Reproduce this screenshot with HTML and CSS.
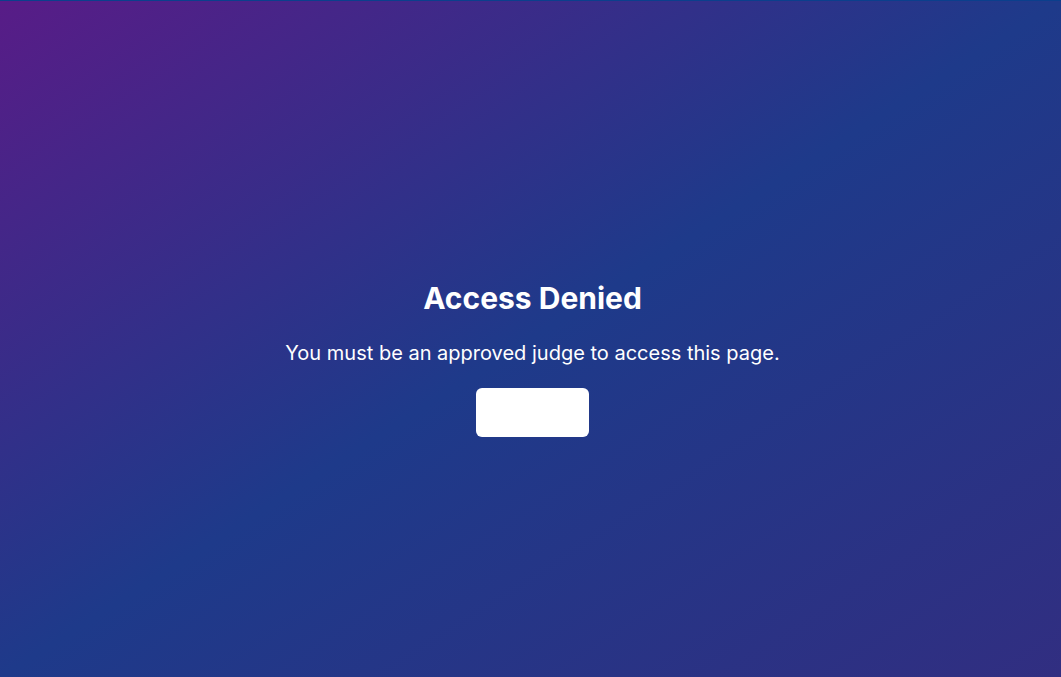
FILE: index.html
```html
<!DOCTYPE html>
<html lang="en">
<head>
<meta charset="utf-8">
<title>Access Denied</title>
<link rel="stylesheet" href="styles.css">
</head>
<body>
<div class="page">
  <div class="topline"></div>
  <main class="main">
    <h1 class="title">Access Denied</h1>
    <p class="message">You must be an approved judge to access this page.</p>
    <button class="btn" type="button">Go Home</button>
  </main>
</div>
</body>
</html>
```

FILE: styles.css
```css
* { box-sizing: border-box; }
html, body { margin: 0; padding: 0; }
body {
  font-family: Inter, "Noto Sans", sans-serif;
  color: #ffffff;
}
.page {
  min-height: 100vh;
  display: flex;
  flex-direction: column;
  background: linear-gradient(to bottom right, #581c87 0%, #1e3a8a 50%, #312e81 100%);
}
.topline {
  height: 1px;
  background: #0b3f8c;
}
.main {
  flex: 1;
  display: flex;
  flex-direction: column;
  align-items: center;
  justify-content: center;
  text-align: center;
  padding: 39px 0 0 4px;
}
.title {
  margin: 0 0 23px;
  font-size: 30px;
  line-height: 36px;
  font-weight: 700;
}
.message {
  margin: 0 0 21px;
  font-size: 20px;
  line-height: 28px;
  font-weight: 400;
}
.btn {
  font-family: inherit;
  font-size: 16px;
  line-height: 24px;
  font-weight: 500;
  white-space: nowrap;
  width: 113px;
  height: 49px;
  padding: 12px 0;
  border: 0;
  border-radius: 6px;
  background: #ffffff;
  color: #ffffff;
}
```
